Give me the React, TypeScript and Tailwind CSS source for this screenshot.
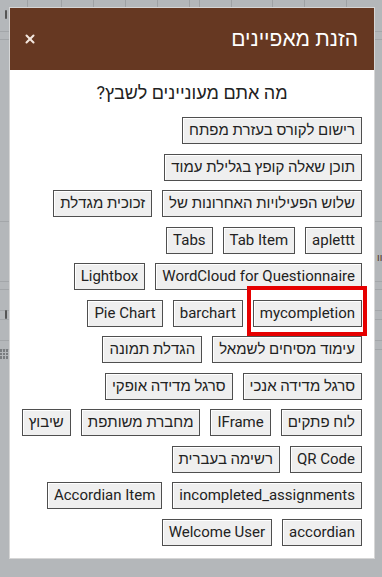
import React from 'react';
import { X } from 'lucide-react';

const rows: string[][] = [
  ['רישום לקורס בעזרת מפתח'],
  ['תוכן שאלה קופץ בגלילת עמוד'],
  ['שלוש הפעילויות האחרונות של', 'זכוכית מגדלת'],
  ['aplettt', 'Tab Item', 'Tabs'],
  ['WordCloud for Questionnaire', 'Lightbox'],
  ['mycompletion', 'barchart', 'Pie Chart'],
  ['עימוד מסיחים לשמאל', 'הגדלת תמונה'],
  ['סרגל מדידה אנכי', 'סרגל מדידה אופקי'],
  ['לוח פתקים', 'IFrame', 'מחברת משותפת', 'שיבוץ'],
  ['QR Code', 'רשימה בעברית'],
  ['incompleted_assignments', 'Accordian Item'],
  ['accordian', 'Welcome User'],
];

const toolbarCells = [28, 34, 32, 32, 32, 32, 10, 32, 41, 32, 42];

const App: React.FC = () => {
  return (
    <div
      className="relative h-[577px] w-[382px] overflow-hidden bg-[#b4b7ba]"
      style={{ fontFamily: 'Roboto, "Liberation Sans", "DejaVu Sans", sans-serif' }}
    >
      {/* page behind the overlay */}
      <div className="flex h-[7px]">
        {toolbarCells.map((w, i) => (
          <div key={i} className="h-full shrink-0 border-r border-[#9fa2a5]" style={{ width: w }} />
        ))}
      </div>
      <div className="mt-[24px] h-[9px] border-y border-[#a3a6a9]" />
      <div className="mt-[181px] border-t border-[#a3a6a9]" />
      <div className="mt-[59px] h-[9px] border-y border-[#a3a6a9]" />
      <div className="mt-[20px] h-[10px] border-y border-[#a3a6a9]" />
      <div className="mt-[20px] h-[10px] border-y border-[#a3a6a9]" />
      <div className="absolute left-[5px] top-[10px] h-[9px] w-[2px] rounded bg-[#555]" />
      <div className="absolute left-[5px] top-[310px] h-[9px] w-[2px] rounded bg-[#555]" />
      <div className="absolute left-0 top-[349px] grid h-[10px] w-[8px] grid-cols-3 gap-px">
        {Array.from({ length: 9 }).map((_, i) => (
          <div key={i} className="bg-[#7a7d80]" />
        ))}
      </div>
      <div className="absolute left-[377px] top-[252px] text-[11px] leading-none text-[#5a3a2a]">ıı</div>

      {/* modal */}
      <div
        dir="rtl"
        className="absolute left-[9px] top-[7px] w-[366px] border border-[#d6d6d6] bg-white"
      >
        <div className="flex h-[62px] items-center justify-between bg-[#663822] pl-[15px] pr-[16px]">
          <h2 className="text-[21px] leading-none text-white">הזנת מאפיינים</h2>
          <button className="-ml-[2px] text-[#f3e6de]" aria-label="close">
            <X size={14} strokeWidth={3.5} />
          </button>
        </div>

        <div className="px-[12px] pb-[12px] pt-[11px]">
          <p className="text-center text-[18px] leading-[24px] text-[#222]">מה אתם מעוניינים לשבץ?</p>
          <div className="mt-[12px] flex flex-col gap-[9.5px]">
            {rows.map((row, i) => (
              <div key={i} className="flex gap-[10px]">
                {row.map((label) => (
                  <div key={label} className="relative">
                    <button className="h-[27px] whitespace-nowrap border border-[#4f4f4f] bg-[#efefef] px-[6px] text-[15px] leading-none text-[#222] shadow-[inset_1px_1px_0_#ffffff]">
                      {label}
                    </button>
                    {label === 'mycompletion' && (
                      <div className="pointer-events-none absolute -bottom-[9px] -left-[6px] -right-[5px] -top-[14px] border-[4px] border-[#e60000]" />
                    )}
                  </div>
                ))}
              </div>
            ))}
          </div>
        </div>
      </div>
    </div>
  );
};

export default App;
